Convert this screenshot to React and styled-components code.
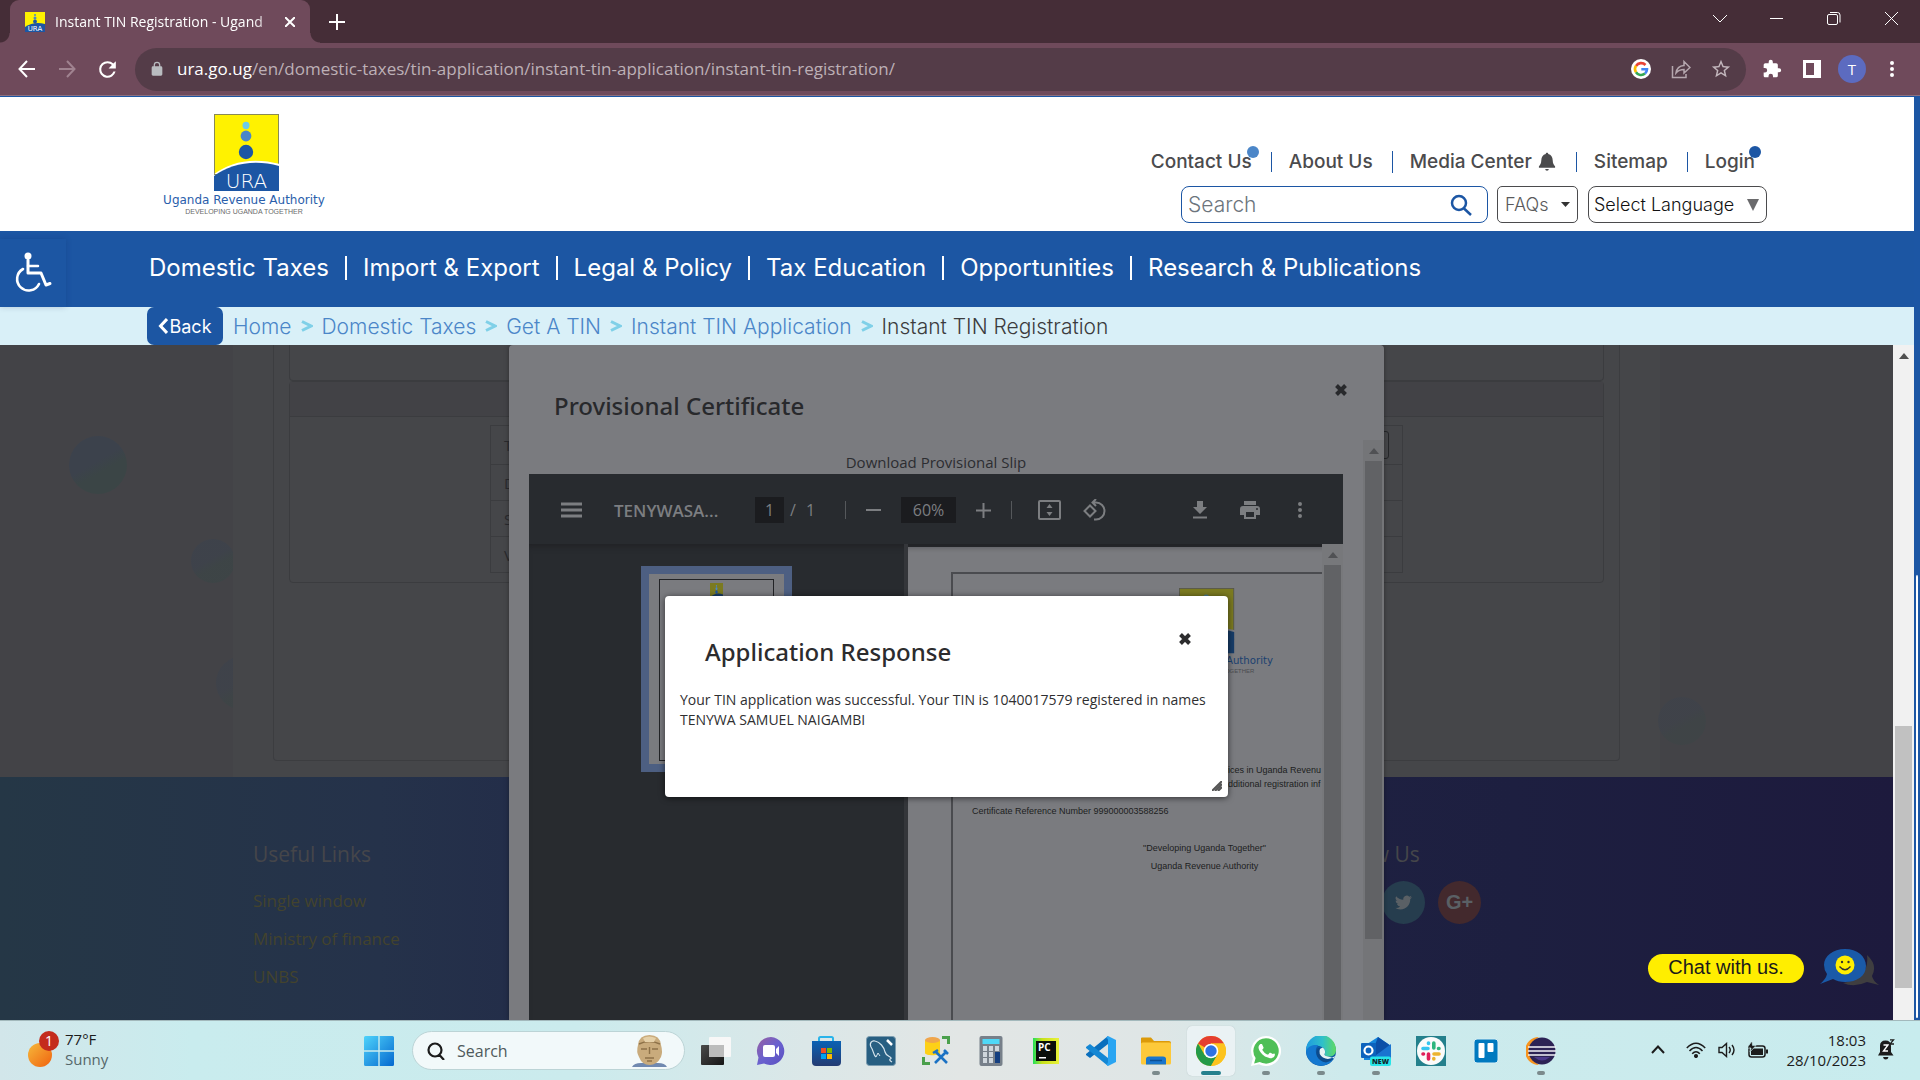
import React from "react";
import styled, { createGlobalStyle } from "styled-components";

const ui = `"Segoe UI", "Open Sans", "Noto Sans", sans-serif`;
const heading = `"Segoe UI", "Noto Sans", "Open Sans", sans-serif`;
const brand = `"Gotham", "Inter", "Liberation Sans", sans-serif`;
const arial = `"Liberation Sans", Arial, sans-serif`;

const GlobalStyle = createGlobalStyle`
  *, *::before, *::after { box-sizing: border-box; }
  html, body, #root { height: 100%; }
  body { margin: 0; font-family: ${ui}; overflow: hidden; }
  button, input, select { font: inherit; color: inherit; background: none; border: 0; padding: 0; margin: 0; outline: 0; }
  a { color: inherit; text-decoration: none; }
  h2, h3, p, ul { margin: 0; padding: 0; font-weight: inherit; list-style: none; }
  svg { display: block; flex: none; }
`;

const Screen = styled.div`
  height: 100vh;
  display: flex;
  flex-direction: column;
  overflow: hidden;
`;

const IconButton = styled.button`
  display: flex;
  align-items: center;
  justify-content: center;
  width: ${(p) => p.$w || 40}px;
  height: ${(p) => p.$h || 40}px;
  flex: none;
`;

/* ---------- browser chrome ---------- */
const TabStrip = styled.div`
  height: 43px;
  flex: none;
  display: flex;
  background: #452d37;
  color: #fff;
  padding-left: 10px;
`;
const Tab = styled.div`
  position: relative;
  width: 300px;
  display: flex;
  align-items: center;
  justify-content: space-between;
  padding: 0 10px 0 15px;
  background: #6f4a5b;
  border-radius: 9px 9px 0 0;
  &::before, &::after {
    content: "";
    position: absolute;
    bottom: 0;
    width: 10px;
    height: 10px;
  }
  &::before { left: -10px; background: radial-gradient(circle at 0 0, transparent 9px, #6f4a5b 10px); }
  &::after { right: -10px; background: radial-gradient(circle at 100% 0, transparent 9px, #6f4a5b 10px); }
`;
const TabTitle = styled.span`
  flex: 1;
  margin-left: 10px;
  font-size: 14px;
  line-height: 20px;
  white-space: nowrap;
  mask-image: linear-gradient(90deg, #000 88%, rgba(0, 0, 0, 0.2));
`;
const WindowControls = styled.div`
  margin-left: auto;
  display: flex;
  height: 37px;
`;
const Toolbar = styled.div`
  height: 53px;
  flex: none;
  display: flex;
  align-items: center;
  background: #6f4a5b;
  border-bottom: 1px solid #8d7080;
  padding: 0 8px 0 7px;
  color: #fff;
`;
const AddressBar = styled.div`
  flex: 1;
  height: 43px;
  border-radius: 22px;
  background: #543c48;
  display: flex;
  align-items: center;
  margin: 0 6px 0 8px;
  padding: 0 5px 0 14px;
`;
const Url = styled.span`
  flex: 1;
  margin-left: 12px;
  font-size: 17px;
  line-height: 24px;
  color: #bdb0b6;
  white-space: nowrap;
  b { font-weight: 400; color: #fff; }
`;
const Avatar = styled.button`
  width: 28px;
  height: 28px;
  margin: 0 6px;
  border-radius: 50%;
  background: #5c6bc0;
  color: #fff;
  font-size: 15px;
`;

/* ---------- site frame ---------- */
const Viewport = styled.div`
  flex: 1;
  min-height: 0;
  display: flex;
  border-top: 1px solid #1c56a4;
`;
const Site = styled.div`
  flex: 1;
  min-width: 0;
  display: flex;
  flex-direction: column;
`;
const OuterScroll = styled.div`
  width: 6px;
  background: #1c56a4;
  display: flex;
  flex-direction: column;
  &::before { content: ""; flex: 479; }
  &::after { content: ""; flex: 444; background: #fff; border: 1px solid #1c56a4; border-width: 1px 2px 2px; border-radius: 3px; }
`;
const Container = styled.div`
  width: 100%;
  max-width: 1620px;
  margin: 0 auto;
  display: flex;
`;
const Header = styled.header`
  height: 134px;
  flex: none;
  display: flex;
  background: #fff;
`;
const LogoLink = styled.a`
  display: block;
  margin: 17px 0 0 15px;
`;
const HeaderSide = styled.div`
  margin-left: auto;
  padding-top: 53px;
  display: flex;
  flex-direction: column;
  align-items: flex-end;
  font-family: ${brand};
`;
const TopLinks = styled.nav`
  display: flex;
  align-items: center;
  margin-right: 12px;
  height: 24px;
  font-size: 19px;
  font-weight: 500;
  color: #4b4b4d;
`;
const TopLink = styled.a`
  position: relative;
  display: flex;
  align-items: center;
  gap: 5px;
  padding: 0 19px 0 17px;
  border-left: 1px solid ${(p) => (p.$first ? "transparent" : "#1c56a4")};
  line-height: 20px;
  &:last-child { padding-right: 0; }
`;
const Dot = styled.i`
  position: absolute;
  top: -6px;
  right: ${(p) => p.$right}px;
  width: 12px;
  height: 12px;
  border-radius: 50%;
  background: ${(p) => p.$color};
`;
const Tools = styled.div`
  display: flex;
  margin-top: 12px;
  height: 37px;
  color: #4b4b4d;
`;
const SearchBox = styled.label`
  width: 307px;
  display: flex;
  align-items: center;
  border: 1px solid #1c56a4;
  border-radius: 8px;
  padding: 0 15px 0 6px;
  input { flex: 1; min-width: 0; font-size: 21px; font-weight: 300; }
  input::placeholder { color: #6c757d; opacity: 1; }
`;
const SelectBox = styled.label`
  width: ${(p) => p.$w}px;
  margin-left: ${(p) => p.$gap}px;
  display: flex;
  align-items: center;
  border: 1px solid #4b4b4d;
  border-radius: ${(p) => p.$r}px;
  padding: 0 7px 0 ${(p) => p.$pad}px;
  font-size: 18px;
  font-weight: 300;
  color: ${(p) => p.$color};
  select { flex: 1; min-width: 0; appearance: none; }
`;
const MainNav = styled.nav`
  height: 76px;
  flex: none;
  display: flex;
  align-items: center;
  position: relative;
  padding-bottom: 2px;
  background: #1c56a3;
  color: #fff;
  font-family: ${brand};
  font-size: 24px;
`;
const Access = styled.button`
  position: absolute;
  left: 0;
  top: 8px;
  width: 66px;
  height: 68px;
  padding-left: 14px;
  background: #1c56a3;
  box-shadow: 0 0 6px rgba(0, 20, 80, 0.18);
`;
const NavLink = styled.a`
  padding: 0 16px;
  line-height: 24px;
  border-left: 2px solid #fff;
  white-space: nowrap;
  &:first-child { border-left: 0; padding-left: 2px; }
`;
const Crumbs = styled.nav`
  height: 38px;
  flex: none;
  display: flex;
  background: #d9f0f8;
  font-family: ${brand};
  font-size: 21px;
  font-weight: 300;
  color: #4b86c8;
`;
const BackButton = styled.button`
  width: 76px;
  margin-right: 10px;
  border-radius: 7px;
  background: #1c56a3;
  color: #fff;
  font-size: 18px;
  font-weight: 400;
  display: flex;
  align-items: center;
  justify-content: center;
  gap: 1px;
`;
const Crumb = styled.span`
  display: flex;
  align-items: center;
  white-space: nowrap;
  color: ${(p) => (p.$current ? "#3c3c3e" : "inherit")};
  svg { margin: 0 9px; }
`;

/* ---------- dimmed page ---------- */
const Frame = styled.div`
  flex: 1;
  min-height: 0;
  display: flex;
`;
const PageBody = styled.main`
  position: relative;
  flex: 1;
  min-width: 0;
  display: flex;
  flex-direction: column;
  overflow: hidden;
  background: #434347;
`;
const Upper = styled.section`
  position: relative;
  height: 432px;
  flex: none;
  overflow: hidden;
`;
const Bubble = styled.i`
  position: absolute;
  left: ${(p) => p.$x}px;
  top: ${(p) => p.$y}px;
  width: ${(p) => p.$d}px;
  height: ${(p) => p.$d}px;
  border-radius: 50%;
  background: linear-gradient(150deg, #3c424c 45%, #3b4546 60%);
  opacity: ${(p) => p.$o || 1};
`;
const Band = styled.div`
  position: relative;
  max-width: 1427px;
  height: 100%;
  margin: 0 auto;
  background: #454649;
`;
const FormCard = styled.div`
  max-width: 1347px;
  height: 416px;
  margin: 0 auto;
  padding: 0 15px;
  border: 1px solid #3c3d40;
  border-top: 0;
  border-radius: 0 0 4px 4px;
`;
const Panel = styled.div`
  height: ${(p) => p.$h}px;
  border: 1px solid #3b3c3f;
  border-radius: 4px;
  ${(p) => p.$open && "border-top: 0; border-radius: 0 0 4px 4px;"}
`;
const PanelHead = styled.div`
  height: 35px;
  border-bottom: 1px solid #3b3c3f;
  background: #424246;
`;
const FieldTable = styled.table`
  width: 913px;
  margin: 8px auto 0;
  border-collapse: collapse;
  font-size: 15px;
  color: #2a2a2e;
  td, th { height: 36px; padding: 0 13px; border: 1px solid #3b3c3f; text-align: left; font-weight: 400; }
  tr:first-child > * { height: 39px; }
  input { width: 100%; height: 28px; border: 1px solid #252629; border-radius: 3px; display: block; }
`;
const Footer = styled.footer`
  flex: 1;
  display: grid;
  grid-template-columns: 1fr 314px;
  padding: 62px 253px 0;
  background: linear-gradient(90deg, #253746 0, #25324a 20%, #232d49 28%, #1f2242 62%, #1d1f40 80%, #1d1a3d 100%);
  color: #45464a;
`;
const FooterTitle = styled.h3`
  font-size: 21px;
  line-height: 30px;
`;
const FooterLinks = styled.ul`
  margin-top: 13px;
  font-size: 17px;
  line-height: 38px;
  color: #43432d;
`;
const Social = styled.div`
  display: flex;
  gap: 13px;
  margin-top: 12px;
`;
const SocialLink = styled.a`
  width: 43px;
  height: 43px;
  border-radius: 50%;
  display: flex;
  align-items: center;
  justify-content: center;
  background: ${(p) => p.$bg};
  color: #5a6065;
  font: 700 20px ${arial};
`;

/* ---------- scroll bars ---------- */
const Bar = styled.div`
  width: 21px;
  flex: none;
  display: flex;
  flex-direction: column;
  align-items: center;
  background: ${(p) => p.$track};
`;
const BarArrow = styled.span`
  height: 21px;
  flex: none;
  display: flex;
  align-items: center;
`;
const BarPart = styled.span`
  width: 17px;
  flex: ${(p) => p.$size} 0 0;
  background: ${(p) => p.$color || "transparent"};
`;
function ScrollBar({ track, thumb, arrow, parts }) {
  return (
    <Bar $track={track}>
      <BarArrow>
        <svg width="10" height="6"><path d="M0 6L5 0L10 6Z" fill={arrow} /></svg>
      </BarArrow>
      <BarPart $size={parts[0]} />
      <BarPart $size={parts[1]} $color={thumb} />
      <BarPart $size={parts[2]} />
    </Bar>
  );
}

/* ---------- certificate modal ---------- */
const Overlay = styled.div`
  position: absolute;
  inset: 0;
  display: flex;
  justify-content: center;
  align-items: ${(p) => (p.$top ? "flex-start" : "stretch")};
  padding-top: ${(p) => p.$top || 0}px;
`;
const Modal = styled.section`
  width: 875px;
  display: flex;
  flex-direction: column;
  border-radius: 4px 4px 0 0;
  background: #7a7b7f;
  box-shadow: 0 0 5px rgba(0, 0, 0, 0.35);
`;
const ModalHead = styled.div`
  height: ${(p) => p.$h}px;
  flex: none;
  display: flex;
  justify-content: space-between;
  padding: ${(p) => p.$top}px 23px 0 ${(p) => p.$pad}px;
  color: ${(p) => p.$color};
  h2 { margin-top: ${(p) => p.$drop}px; font: 500 24px/34px ${heading}; }
`;
const ModalScroll = styled.div`
  flex: 1;
  min-height: 0;
  display: flex;
`;
const ModalContent = styled.div`
  flex: 1;
  min-width: 0;
  padding: 11px 20px 0;
  display: flex;
  flex-direction: column;
`;
const SlipLink = styled.a`
  align-self: center;
  font-size: 15px;
  line-height: 23px;
  color: #2c2d31;
`;
const Pdf = styled.div`
  flex: 1;
  min-height: 0;
  display: flex;
  flex-direction: column;
  background: #282b2f;
`;
const PdfBar = styled.div`
  height: 70px;
  flex: none;
  display: flex;
  align-items: center;
  padding: 2px 31px 0 32px;
  color: #7c7e81;
  font-size: 16px;
`;
const PdfTitle = styled.b`
  width: 110px;
  margin: 0 31px 0 32px;
  font-size: 17px;
  font-weight: 600;
`;
const PdfInput = styled.input`
  width: ${(p) => p.$w}px;
  height: 26px;
  background: #1b1c1f;
  text-align: center;
`;
const PdfCount = styled.span`
  width: 61px;
  padding-left: 6px;
  word-spacing: 6px;
`;
const Rule = styled.i`
  width: 1px;
  height: 18px;
  background: #55585b;
`;
const PdfTools = styled.div`
  display: flex;
  align-items: center;
  gap: ${(p) => p.$gap}px;
  margin-left: ${(p) => p.$left};
`;
const PdfBody = styled.div`
  flex: 1;
  min-height: 0;
  display: flex;
  box-shadow: inset 0 6px 6px -4px #202124;
`;
const Thumbs = styled.aside`
  width: 379px;
  flex: none;
  border-right: 4px solid #34363a;
  padding-top: 22px;
`;
const Thumb = styled.div`
  width: 151px;
  height: 206px;
  margin: 0 auto;
  border: 8px solid #4d5f82;
  background: #7a7b7f;
  padding: 5px 10px 2px;
`;
const ThumbPage = styled.div`
  height: 182px;
  border: 1px solid #222326;
  padding-top: 3px;
  display: flex;
  justify-content: center;
`;
const PaperView = styled.div`
  flex: 1;
  min-width: 0;
  overflow: hidden;
  padding-top: 3px;
`;
const Paper = styled.article`
  width: 596px;
  height: 100%;
  background: #7a7b7f;
  padding: 25px 0 0 43px;
  box-shadow: inset 0 5px 5px -4px #5c5d61;
`;
const PaperFrame = styled.div`
  width: 507px;
  height: 100%;
  border: 2px solid #4a4b4f;
  border-bottom: 0;
  display: flex;
  flex-direction: column;
  align-items: center;
  padding: 14px 19px 0;
  font: 9px/14px ${arial};
  color: #1d1e21;
  white-space: nowrap;
`;
const PaperText = styled.p`
  align-self: ${(p) => p.$align || "flex-start"};
  padding-left: ${(p) => p.$left || 0}px;
  margin-top: ${(p) => p.$top || 0}px;
`;
const Dialog = styled.section`
  position: relative;
  width: 563px;
  height: 201px;
  border-radius: 4px;
  background: #fff;
  box-shadow: 0 1px 6px rgba(0, 0, 0, 0.6);
`;
const DialogText = styled.p`
  padding: 0 15px;
  font-size: 14px;
  line-height: 20px;
  color: #2f2f31;
`;
const Grip = styled.svg`
  position: absolute;
  right: 6px;
  bottom: 6px;
`;
const Chat = styled.div`
  position: absolute;
  right: 13px;
  bottom: 33px;
  display: flex;
  align-items: flex-end;
  gap: 16px;
`;
const ChatPill = styled.button`
  width: 156px;
  height: 29px;
  margin-bottom: 4px;
  padding-bottom: 3px;
  border-radius: 15px;
  background: #ffee00;
  color: #1b1b1b;
  font: 20px ${arial};
`;

/* ---------- taskbar ---------- */
const Taskbar = styled.footer`
  height: 60px;
  flex: none;
  display: grid;
  grid-template-columns: 1fr auto 1fr;
  border-top: 1px solid #a3b9bc;
  color: #1c1c1c;
  background: linear-gradient(90deg, #d2e6ea 0, #c9ecee 10%, #cbebed 30%, #dbe7e8 42%, #e2e6e5 50%, #dfe6e6 60%, #cdeaec 70%, #c8ecee 100%);
`;
const Weather = styled.button`
  display: flex;
  align-items: center;
  justify-self: start;
  padding: 0 0 4px 27px;
  gap: 5px;
  text-align: left;
  font-size: 15px;
  line-height: 20px;
  span { display: block; }
  span + span { color: #55676a; }
`;
const Apps = styled.div`
  display: flex;
  align-items: center;
  gap: 7px;
`;
const AppButton = styled.button`
  position: relative;
  width: 48px;
  height: 50px;
  display: flex;
  align-items: center;
  justify-content: center;
  border-radius: 5px;
  ${(p) => p.$active && "background: #eaf2f4; box-shadow: 0 0 1px #a9b9bb;"}
  &::after {
    content: "";
    position: absolute;
    bottom: 1px;
    width: ${(p) => (p.$active ? 20 : 8)}px;
    height: 4px;
    border-radius: 2px;
    background: ${(p) => (p.$active ? "#26808d" : "#7b8a8c")};
    display: ${(p) => (p.$active || p.$running ? "block" : "none")};
  }
`;
const TaskSearch = styled.label`
  width: 273px;
  height: 39px;
  margin-left: 2px;
  display: flex;
  align-items: center;
  gap: 12px;
  padding: 0 17px 0 14px;
  border-radius: 20px;
  background: #f2f9fa;
  border: 1px solid #bcd4d6;
  font-size: 16px;
  input { flex: 1; min-width: 0; }
  input::placeholder { color: #4f5a5c; opacity: 1; }
`;
const Tray = styled.div`
  justify-self: end;
  display: flex;
  align-items: center;
  padding: 0 24px 2px 0;
`;
const Clock = styled.time`
  width: 90px;
  margin-right: 10px;
  text-align: right;
  font-size: 15px;
  line-height: 20px;
  white-space: nowrap;
`;

/* ---------- drawings ---------- */
function UraLogo({ width = 164, dim }) {
  const c = dim
    ? { y: "#7b7a20", b: "#173c68", l: "#4c7c8f", m: "#2f5274", w: "#7a7b7f", t: "#1c416f", g: "#4a4b4f", s: "#55564a" }
    : { y: "#fff200", b: "#1c56a4", l: "#6dcbea", m: "#4b86c8", w: "#fff", t: "#2a5eab", g: "#6b6b6b", s: "#8a8a55" };
  return (
    <svg width={width} height={(width * 102) / 164} viewBox="0 0 164 102" role="img" aria-label="Uganda Revenue Authority">
      <rect x="52.5" y="0.500" width="64" height="60" fill={c.y} stroke={c.s} />
      <ellipse cx="84" cy="11.500" rx="3.500" ry="3.700" fill={c.l} />
      <circle cx="84" cy="22" r="5.400" fill={c.m} />
      <circle cx="84" cy="38" r="7.200" fill={c.b} />
      <path d="M51 61C68 47 92 43 118 50V60H51Z" fill={c.w} />
      <path d="M52 62C68 50 92 45 117 52V77H52Z" fill={c.b} />
      <text x="84.500" y="74" fontFamily="DejaVu Sans" fontWeight="200" fontSize="20" textAnchor="middle" fill={c.w}>URA</text>
      <text x="82" y="90" fontFamily="DejaVu Sans" fontSize="12" textAnchor="middle" fill={c.t}>Uganda Revenue Authority</text>
      <text x="82" y="100" fontFamily="Liberation Sans" fontSize="7" textAnchor="middle" fill={c.g}>DEVELOPING UGANDA TOGETHER</text>
    </svg>
  );
}

const MiniLogo = ({ w = 20, h = 20, dim }) => (
  <svg width={w} height={h} viewBox="0 0 20 20" preserveAspectRatio="none">
    <rect width="20" height="20" fill={dim ? "#7b7a20" : "#fff200"} />
    <circle cx="10" cy="3" r="1" fill="#4b86c8" />
    <circle cx="10" cy="6" r="1.500" fill="#4b86c8" />
    <circle cx="10" cy="9.500" r="1.900" fill="#1c56a4" />
    <path d="M0 15Q9 9 20 12V20H0Z" fill={dim ? "#173c68" : "#1c56a4"} />
    <text x="10" y="19" fontSize="7" fontFamily="DejaVu Sans" textAnchor="middle" fill={dim ? "#7a7b7f" : "#fff"}>URA</text>
  </svg>
);

const Line = ({ w = 20, h = w, d, sw = 2, box, color = "currentColor", ...rest }) => (
  <svg width={w} height={h} viewBox={box || `0 0 ${w} ${h}`} fill="none" stroke={color} strokeWidth={sw} {...rest}>
    <path d={d} />
  </svg>
);
const Solid = ({ w = 20, h = w, d, box = "0 0 24 24", color = "currentColor" }) => (
  <svg width={w} height={h} viewBox={box} fill={color}><path fillRule="evenodd" d={d} /></svg>
);

const CloseGlyph = () => (
  <Line w={14} sw={4} d="M2.500 2.500L11.500 11.500M11.500 2.500L2.500 11.500" />
);

const ic = {
  dots: "M12 8a2 2 0 1 0 0-4 2 2 0 0 0 0 4zm0 2a2 2 0 1 0 0 4 2 2 0 0 0 0-4zm0 6a2 2 0 1 0 0 4 2 2 0 0 0 0-4z",
  lock: "M18 8h-1V6A5 5 0 0 0 7 6v2H6a2 2 0 0 0-2 2v10c0 1.100.9 2 2 2h12a2 2 0 0 0 2-2V10a2 2 0 0 0-2-2zM8.900 6a3.100 3.100 0 0 1 6.200 0v2H8.900z",
  reload: "M17.650 6.350A7.950 7.950 0 0 0 12 4a8 8 0 1 0 7.730 10h-2.080A6 6 0 1 1 12 6c1.660 0 3.140.69 4.220 1.780L13 11h7V4z",
  puzzle: "M20.500 11H19V7a2 2 0 0 0-2-2h-4V3.500a2.500 2.500 0 0 0-5 0V5H4a2 2 0 0 0-2 2v3.800h1.500a2.700 2.700 0 0 1 0 5.400H2V20c0 1.100.9 2 2 2h3.800v-1.500a2.700 2.700 0 0 1 5.400 0V22H17a2 2 0 0 0 2-2v-4h1.500a2.500 2.500 0 0 0 0-5z",
  star: "M22 9.240l-7.190-.62L12 2 9.190 8.630 2 9.240l5.460 4.730L5.820 21 12 17.270 18.180 21l-1.630-7.030zM12 15.400l-3.760 2.270 1-4.280-3.320-2.880 4.380-.38L12 6.100l1.710 4.040 4.380.38-3.320 2.880 1 4.280z",
  bell: "M12 22.500a2.200 2.200 0 0 0 2.200-2H9.800a2.200 2.200 0 0 0 2.200 2zM12 1c-.9 0-1.500.6-1.500 1.500C7 3.300 5.300 6.300 5.200 9.500 5 14 3.800 15.500 2.300 17.200V19h19.400v-1.800c-1.500-1.700-2.700-3.200-2.900-7.700-.1-3.200-1.800-6.200-5.300-7C13.500 1.600 12.900 1 12 1z",
  twitter: "M23.950 4.570a10 10 0 0 1-2.820.77 4.960 4.960 0 0 0 2.160-2.720c-.95.55-2 .96-3.130 1.180a4.920 4.920 0 0 0-8.380 4.480C7.690 8.100 4.070 6.130 1.640 3.160a4.920 4.920 0 0 0 1.520 6.570 4.900 4.900 0 0 1-2.230-.62v.06a4.920 4.920 0 0 0 3.950 4.830 5 5 0 0 1-2.210.08 4.940 4.940 0 0 0 4.600 3.420A9.870 9.870 0 0 1 0 19.540a13.990 13.990 0 0 0 7.550 2.210c9.050 0 14-7.500 14-13.980 0-.21 0-.42-.02-.63a9.940 9.940 0 0 0 2.460-2.550z",
  download: "M19 9h-4V3H9v6H5l7 7zM5 18.500v2h14v-2z",
  print: "M19 8H5a3 3 0 0 0-3 3v6h4v4h12v-4h4v-6a3 3 0 0 0-3-3zm-3 11H8v-5h8zm3-7a1 1 0 1 1 0-2 1 1 0 0 1 0 2zM18 3H6v4h12z",
  whatsapp: "M17.470 14.380c-.3-.15-1.760-.87-2.030-.97-.27-.1-.47-.15-.67.150-.2.300-.77.970-.94 1.160-.17.200-.35.220-.64.080-.3-.15-1.260-.46-2.390-1.480-.88-.79-1.480-1.760-1.650-2.060-.17-.3-.02-.46.130-.6.130-.14.300-.35.450-.52.150-.18.200-.3.300-.5.100-.2.050-.37-.03-.52-.07-.15-.67-1.610-.92-2.210-.24-.58-.49-.5-.67-.51h-.57c-.2 0-.52.070-.79.370-.27.300-1.040 1.020-1.040 2.480s1.070 2.870 1.210 3.070c.15.200 2.100 3.200 5.080 4.490 2.950 1.200 3.560.96 4.200.9.640-.06 2.060-.84 2.350-1.650.29-.81.290-1.500.2-1.650-.09-.15-.27-.22-.57-.37z",
};

const appIcons = [
  ["Task view", <svg key="a" width="30" height="30"><defs><linearGradient id="tv" x1="0" y1="0" x2="1" y2="1"><stop stopColor="#4a4a4a" /><stop offset="1" stopColor="#161616" /></linearGradient></defs><rect x="0" y="9" width="23" height="20" rx="1" fill="url(#tv)" /><rect x="8" y="1" width="22" height="20" rx="1" fill="#f7f7f7" /><rect x="8" y="9" width="15" height="12" fill="#bcbcbc" /></svg>],
  ["Chat", <svg key="b" width="30" height="30"><defs><linearGradient id="ch" x1="0" y1="0" x2="1" y2="1"><stop stopColor="#9a5fa0" /><stop offset=".5" stopColor="#6a62cf" /><stop offset="1" stopColor="#5a4fc0" /></linearGradient></defs><path d="M15 1a14 14 0 1 1-7 26.500L1 29 2.500 21.500A14 14 0 0 1 15 1Z" fill="url(#ch)" /><rect x="7" y="9" width="12" height="12" rx="2" fill="#fff" /><path d="M20 13L23 10V20L20 17Z" fill="#fff" /></svg>],
  ["Store", <svg key="c" width="30" height="30"><defs><linearGradient id="st" x1="0" y1="0" x2="0" y2="1"><stop stopColor="#0b62b4" /><stop offset="1" stopColor="#243b73" /></linearGradient></defs><path d="M8 7V2.500A1.500 1.500 0 0 1 9.500 1H20.500A1.500 1.500 0 0 1 22 2.500V7" fill="none" stroke="#2ab4ea" strokeWidth="2" /><path d="M1 5H30V26A4 4 0 0 1 26 30H5A4 4 0 0 1 1 26Z" fill="url(#st)" /><path d="M10 12h5v5h-5z" fill="#f25022" /><path d="M16 12h5v5h-5z" fill="#7fba00" /><path d="M10 18h5v5h-5z" fill="#00a4ef" /><path d="M16 18h5v5h-5z" fill="#ffb900" /></svg>],
  ["MySQL Workbench", <svg key="d" width="30" height="30"><rect x=".5" y=".5" width="29" height="29" rx="3" fill="#285f82" stroke="#7b9cb0" /><path d="M10 21C7 19 8 15 5 11C3 7 6 4 9 5C14 6 18 11 19 16C20 20 24 20 25 22C26 23 21 23 26 26" fill="none" stroke="#d9e6ee" strokeWidth="1.200" /><path d="M10 21L12 17L14 20" fill="none" stroke="#d9e6ee" /><path d="M21 4L26 9" stroke="#fff" strokeWidth="2.500" /></svg>],
  ["SQL tools", <svg key="e" width="30" height="30"><path d="M4 4V17C4 20 19 20 19 17V4Z" fill="#fdd017" /><ellipse cx="11.500" cy="4" rx="7.500" ry="3" fill="#efa64c" /><path d="M21 1.500H27.500V8M2.500 21V27.500H9" fill="none" stroke="#4aa04c" strokeWidth="3" /><path d="M14 15L26 27M26 15L14 27M12 17L17 14M23 14L27 18" stroke="#1b72c4" strokeWidth="2.600" /></svg>],
  ["Calculator", <svg key="f" width="24" height="30"><rect x=".5" width="23" height="30" rx="2" fill="#77808a" /><rect x="3.500" y="3" width="17" height="5" fill="#4fd8f7" /><path d="M4 10h4v5H4zM10 10h4v5h-4zM16 10h4v5h-4zM4 16h4v5H4zM10 16h4v5h-4zM4 22h4v5H4zM10 22h4v5h-4z" fill="#cfd6dc" /><path d="M16 16h5v11h-5z" fill="#143f80" /></svg>],
  ["PyCharm", <svg key="g" width="26" height="26"><defs><linearGradient id="pc"><stop stopColor="#21e05a" /><stop offset=".35" stopColor="#c8e01c" /><stop offset="1" stopColor="#e9f23a" /></linearGradient></defs><rect width="26" height="26" fill="url(#pc)" /><rect x="3" y="3" width="20" height="20" fill="#0b0f0a" /><text x="5" y="13" fontSize="10" fontWeight="700" fontFamily="Open Sans" fill="#fff">PC</text><rect x="6" y="19" width="7" height="1.500" fill="#fff" /></svg>],
  ["VS Code", <svg key="h" width="30" height="30" viewBox="0 0 30 30"><path d="M22 0L22 8L4 22L0 19V18Z" fill="#0a6fbd" /><path d="M22 30L22 22L4 8L0 11V12Z" fill="#1487d4" /><path d="M22 0L30 4V26L22 30L20 28Q22 28 22 26V4Q22 2 20 2Z" fill="#2aa5f2" /></svg>],
  ["File Explorer", <svg key="i" width="30" height="28"><path d="M0 1.500Q0 .5 1 .5H10L13 4H28Q30 4 30 6V12H0Z" fill="#dc9a0a" /><rect y="5.500" width="30" height="22" rx="1.500" fill="#fdc93a" /><path d="M5 27.500V22Q5 19.500 8 19.500H22Q25 19.500 25 22V27.500Z" fill="#1a76cc" /><path d="M9 23.500H21" stroke="#0b4f94" strokeWidth="1.500" /></svg>, "running"],
  ["Chrome", <svg key="j" width="30" height="30" viewBox="0 0 30 30"><circle cx="15" cy="15" r="15" fill="#fcc31e" /><path d="M15 15L2 7.500A15 15 0 0 1 28 7.500H15Z" fill="#e53e30" /><path d="M2 7.500A15 15 0 0 0 15 30L21.500 18.700L8.500 18.700Z" fill="#249a48" /><path d="M15 15L21.500 18.700L15 30A15 15 0 0 0 28 7.500H15Z" fill="#fcc31e" /><circle cx="15" cy="15" r="7.300" fill="#fff" /><circle cx="15" cy="15" r="5.700" fill="#2f72e3" /></svg>, "active"],
  ["WhatsApp", <svg key="k" width="30" height="30" viewBox="0 0 24 24"><path d="M12 0a12 12 0 1 1-5.600 22.600L0 24l1.500-6.300A12 12 0 0 1 12 0Z" fill="#fff" /><path d="M12 1.700a10.200 10.200 0 1 1-5 19.100L2.500 22l1.200-4.400A10.200 10.200 0 0 1 12 1.700Z" fill="#4fbf57" /><path d={ic.whatsapp} fill="#fff" /></svg>, "running"],
  ["Edge", <svg key="l" width="30" height="30" viewBox="0 0 30 30"><defs><linearGradient id="eg"><stop stopColor="#1f9be0" /><stop offset=".55" stopColor="#2fc0c9" /><stop offset="1" stopColor="#5fda62" /></linearGradient></defs><circle cx="15" cy="15" r="15" fill="#0c59a4" /><path d="M0 14A15 15 0 0 1 30 14C30 19 26 21 22 20.500Q17.500 20 19 17C20 13 16 10 12 10Q5 10 0 16Z" fill="url(#eg)" /><path d="M0 15C3 9 9 8.500 12.500 9.500C9 12 9 17 12 20C16 25 23 25 27.500 23A15 15 0 0 1 0 15Z" fill="#1478d0" /><path d="M12 12C8 17 11 25 20 26.500Q24 26 27.500 23Q20 24 15.500 19.500Q12 15 14.500 12Z" fill="#0d4b8c" /><path d="M14 13Q12 18 17 21.500Q23 25 29 20L28 22.500Q24 20.800 20 20Q17.500 19 19 17Q19.500 13 16.500 11.500Z" fill="#e6f3f4" /></svg>, "running"],
  ["Outlook", <svg key="m" width="31" height="30" viewBox="0 0 31 30"><path d="M3 10L17 1L30 10V24H3Z" fill="#1586dc" /><path d="M17 1L30 10L14 20V9Z" fill="#0b4fa8" /><path d="M14 20L30 8V26H14Z" fill="#1a74d0" /><rect y="7" width="15" height="15" rx="1" fill="#0c62bd" /><circle cx="7.500" cy="14.500" r="4" fill="none" stroke="#fff" strokeWidth="2.200" /><rect x="9" y="20.500" width="21" height="9.500" rx="2" fill="#27e5e8" /><text x="19.500" y="28.300" fontSize="7" fontWeight="800" textAnchor="middle" fontFamily="Open Sans" fill="#10262b">NEW</text></svg>, "running"],
  ["Slack", <svg key="n" width="30" height="30"><rect width="30" height="30" fill="#24808c" /><circle cx="15" cy="15" r="14" fill="#fbfbfb" /><g strokeWidth="3.600" strokeLinecap="round"><path d="M7 12.500H12M12.500 7V7.500" stroke="#36c5f0" /><path d="M17.800 7V12M22.500 12.500H23" stroke="#2eb67d" /><path d="M18 18H23M17.800 22.500V23" stroke="#ecb22e" /><path d="M12.500 18V23M7 18H7.500" stroke="#e01e5a" /></g></svg>],
  ["Trello", <svg key="o" width="26" height="26"><rect x="1" y="1" width="24" height="24" rx="3" fill="#0079bf" stroke="#d5eef4" /><rect x="5.500" y="5" width="6" height="15" rx="1" fill="#fff" /><rect x="14.500" y="5" width="6" height="9" rx="1" fill="#fff" /></svg>],
  ["Eclipse", <svg key="p" width="30" height="28" viewBox="0 0 30 28"><path d="M13 0A14 14 0 0 0 13 28A16 16 0 0 1 13 0Z" fill="#f7941e" /><ellipse cx="16" cy="14" rx="13.500" ry="13.500" fill="#2c2255" /><path d="M8 20Q16 27 24 20Z" fill="#4c3a8c" /><path d="M2 10H30M2 14H30M2 18H30" stroke="#f2f2f7" strokeWidth="1.600" /></svg>, "running"],
];

const navItems = ["Domestic Taxes", "Import & Export", "Legal & Policy", "Tax Education", "Opportunities", "Research & Publications"];
const crumbs = ["Home", "Domestic Taxes", "Get A TIN", "Instant TIN Application"];
const fields = ["TIN", "Date", "Status", "View"];

export default function App() {
  return (
    <Screen>
      <GlobalStyle />
      <TabStrip>
        <Tab>
          <MiniLogo />
          <TabTitle>Instant TIN Registration - Ugand</TabTitle>
          <IconButton $w={20} $h={20} aria-label="Close tab"><Line w={10} sw={2} d="M0 0L10 10M10 0L0 10" /></IconButton>
        </Tab>
        <IconButton $w={54} $h={43} aria-label="New tab"><Line w={16} d="M8 0V16M0 8H16" /></IconButton>
        <WindowControls>
          <IconButton $w={57} $h={37} aria-label="Search tabs"><Line w={14} h={8} sw={1} d="M0 0L7 7L14 0" /></IconButton>
          <IconButton $w={57} $h={37} aria-label="Minimise"><Line w={13} h={1} d="M0 0H13" /></IconButton>
          <IconButton $w={57} $h={37} aria-label="Restore"><Line w={14} sw={1} d="M.5 4Q.5 2.500 2 2.500H9Q10.500 2.500 10.500 4V11Q10.500 12.500 9 12.500H2Q.5 12.500 .5 11ZM3 .5H10.500Q13 .5 13 3V10.500" /></IconButton>
          <IconButton $w={58} $h={37} aria-label="Close"><Line w={13} sw={1} d="M0 0L13 13M13 0L0 13" /></IconButton>
        </WindowControls>
      </TabStrip>
      <Toolbar>
        <IconButton aria-label="Back"><Line w={18} d="M17 9H2M9 1L1.500 9L9 17" /></IconButton>
        <IconButton aria-label="Forward"><Line w={18} color="#a08390" d="M1 9H16M9 1L16.500 9L9 17" /></IconButton>
        <IconButton aria-label="Reload"><Solid w={25} d={ic.reload} /></IconButton>
        <AddressBar>
          <Solid w={16} color="#b9bcc0" d={ic.lock} />
          <Url><b>ura.go.ug</b>/en/domestic-taxes/tin-application/instant-tin-application/instant-tin-registration/</Url>
          <IconButton aria-label="Google">
            <svg width="20" height="20" viewBox="0 0 20 20"><circle cx="10" cy="10" r="10" fill="#fff" /><g fill="none" strokeWidth="2.600"><path d="M14.500 6A6 6 0 0 0 5 7" stroke="#ea4335" /><path d="M5 6.700A6 6 0 0 0 5 13.300" stroke="#fbbc05" /><path d="M5 13.200A6 6 0 0 0 14 14.500" stroke="#34a853" /><path d="M14 14.500Q16 12.700 16 10.200H10.300" stroke="#4285f4" /></g></svg>
          </IconButton>
          <IconButton aria-label="Share"><Line w={20} sw={1.500} color="#b5a7ae" d="M1.500 7V18.500H15V15M5 14Q6 7 13 6.500V2.500L19 8.500L13 14V10.500Q8 10.500 5 14Z" /></IconButton>
          <IconButton aria-label="Bookmark"><Solid w={22} color="#c2b6bc" d={ic.star} /></IconButton>
        </AddressBar>
        <IconButton aria-label="Extensions"><Solid w={20} d={ic.puzzle} /></IconButton>
        <IconButton aria-label="Side panel"><Solid w={18} box="0 0 18 18" d="M0 0H18V18H0ZM3 3V15H11V3Z" /></IconButton>
        <Avatar>T</Avatar>
        <IconButton aria-label="Menu"><Solid w={24} d={ic.dots} /></IconButton>
      </Toolbar>

      <Viewport>
        <Site>
          <Header>
            <Container>
              <LogoLink href="#"><UraLogo /></LogoLink>
              <HeaderSide>
                <TopLinks>
                  <TopLink $first href="#">Contact Us<Dot $color="#4b86c8" $right={12} /></TopLink>
                  <TopLink href="#">About Us</TopLink>
                  <TopLink href="#">Media Center<Solid w={20} h={22} d={ic.bell} /></TopLink>
                  <TopLink href="#">Sitemap</TopLink>
                  <TopLink href="#">Login<Dot $color="#1c56a4" $right={-6} /></TopLink>
                </TopLinks>
                <Tools>
                  <SearchBox>
                    <input type="search" placeholder="Search" aria-label="Search the site" />
                    <Line w={22} sw={2.500} color="#1c56a4" d="M9 2A7 7 0 1 0 9 16A7 7 0 1 0 9 2M14 14.500L21 21" />
                  </SearchBox>
                  <SelectBox $w={81} $gap={9} $r={5} $pad={7} $color="#5a5a5c">
                    <select aria-label="FAQs"><option>FAQs</option></select>
                    <svg width="9" height="6"><path d="M0 0H9L4.500 5Z" fill="#333" /></svg>
                  </SelectBox>
                  <SelectBox $w={179} $gap={10} $r={8} $pad={5} $color="#111">
                    <select aria-label="Select Language"><option>Select Language</option></select>
                    <svg width="12" height="12"><path d="M0 0H12L6 12Z" fill="#6a6a6c" /></svg>
                  </SelectBox>
                </Tools>
              </HeaderSide>
            </Container>
          </Header>
          <MainNav>
            <Access aria-label="Accessibility">
              <svg width="38" height="42" viewBox="0 0 38 42" fill="none" stroke="#fff" strokeWidth="3" strokeLinecap="round" strokeLinejoin="round">
                <circle cx="14" cy="4" r="3.500" fill="#fff" stroke="none" />
                <path d="M14 8V21H27L32 33L36 31.500" /><path d="M14 14H24" strokeWidth="2.500" />
                <path d="M9 17A11.500 11.500 0 1 0 25 32" strokeWidth="2.600" />
              </svg>
            </Access>
            <Container>{navItems.map((n) => <NavLink key={n} href="#">{n}</NavLink>)}</Container>
          </MainNav>
          <Crumbs>
            <Container>
              <BackButton><Line w={10} h={16} sw={3} d="M9 1L2.500 8L9 15" />Back</BackButton>
              {crumbs.map((c) => (
                <Crumb key={c}>
                  <a href="#">{c}</a>
                  <Line w={12} h={12} sw={3} color="#7fd0e8" d="M1 1.500L10 6L1 10.500" />
                </Crumb>
              ))}
              <Crumb $current>Instant TIN Registration</Crumb>
            </Container>
          </Crumbs>

          <Frame>
            <PageBody>
              <Upper>
                <Bubble $x={69} $y={91} $d={58} />
                <Bubble $x={191} $y={194} $d={44} $o={0.7} />
                <Bubble $x={216} $y={311} $d={54} $o={0.6} />
                <Band>
                  <FormCard>
                    <Panel $open $h={36} />
                    <Panel $h={202}>
                      <PanelHead />
                      <FieldTable>
                        <tbody>
                          {fields.map((f, i) => (
                            <tr key={f}><th scope="row">{f}</th><td>{i === 0 && <input aria-label={f} />}</td></tr>
                          ))}
                        </tbody>
                      </FieldTable>
                    </Panel>
                  </FormCard>
                </Band>
                <Bubble $x={1658} $y={352} $d={48} $o={0.5} />
              </Upper>
              <Footer>
                <div>
                  <FooterTitle>Useful Links</FooterTitle>
                  <FooterLinks>
                    <li><a href="#">Single window</a></li>
                    <li><a href="#">Ministry of finance</a></li>
                    <li><a href="#">UNBS</a></li>
                  </FooterLinks>
                </div>
                <div>
                  <FooterTitle>Follow Us</FooterTitle>
                  <Social>
                    <SocialLink $bg="#27355c" href="#" aria-label="Facebook">f</SocialLink>
                    <SocialLink $bg="#263d4e" href="#" aria-label="Twitter"><Solid w={17} d={ic.twitter} /></SocialLink>
                    <SocialLink $bg="#43292d" href="#" aria-label="Google plus">G+</SocialLink>
                  </Social>
                </div>
              </Footer>

              <Overlay>
                <Modal>
                  <ModalHead $h={95} $top={25} $pad={45} $drop={19} $color="#28292c">
                    <h2>Provisional Certificate</h2>
                    <IconButton aria-label="Close certificate"><CloseGlyph /></IconButton>
                  </ModalHead>
                  <ModalScroll>
                    <ModalContent>
                      <SlipLink href="#">Download Provisional Slip</SlipLink>
                      <Pdf>
                        <PdfBar>
                          <Line w={21} h={16} sw={3} d="M0 2H21M0 8H21M0 14H21" />
                          <PdfTitle>TENYWASA...</PdfTitle>
                          <PdfInput $w={29} defaultValue="1" aria-label="Page number" />
                          <PdfCount>/ 1</PdfCount>
                          <Rule />
                          <PdfTools $gap={20} $left="20px">
                            <Line w={15} h={2} d="M0 1H15" />
                            <PdfInput $w={55} defaultValue="60%" aria-label="Zoom level" />
                            <Line w={15} d="M7.500 0V15M0 7.500H15" />
                            <Rule />
                          </PdfTools>
                          <PdfTools $gap={22} $left="26px">
                            <svg width="23" height="20" fill="none" stroke="currentColor" strokeWidth="2"><rect x="1" y="1" width="21" height="18" rx="1" /><path d="M8.500 8L11.500 4L14.500 8ZM8.500 12L11.500 16L14.500 12Z" fill="currentColor" stroke="none" /></svg>
                            <Line w={23} d="M7 6.500L12.500 12L7 17.500L1.500 12ZM10 3.500H13A8.500 8.500 0 0 1 13 20.500H11M13 0L9.500 3.500L13 7" />
                          </PdfTools>
                          <PdfTools $gap={26} $left="auto">
                            <Solid w={24} d={ic.download} />
                            <Solid w={24} d={ic.print} />
                            <Solid w={24} d={ic.dots} />
                          </PdfTools>
                        </PdfBar>
                        <PdfBody>
                          <Thumbs>
                            <Thumb><ThumbPage><MiniLogo w={13} h={19} dim /></ThumbPage></Thumb>
                          </Thumbs>
                          <PaperView>
                            <Paper>
                              <PaperFrame>
                                <UraLogo width={139} dim />
                                <PaperText $left={239} $top={89}>services in Uganda Revenu</PaperText>
                                <PaperText $left={251}>additional registration inf</PaperText>
                                <PaperText $top={13}>Certificate Reference Number 999000003588256</PaperText>
                                <PaperText $top={23} $align="center">"Developing Uganda Together"</PaperText>
                                <PaperText $top={4} $align="center">Uganda Revenue Authority</PaperText>
                              </PaperFrame>
                            </Paper>
                          </PaperView>
                          <ScrollBar track="#77787b" thumb="#616265" arrow="#505154" parts={[0, 1, 0]} />
                        </PdfBody>
                      </Pdf>
                    </ModalContent>
                    <ScrollBar track="#747578" thumb="#616265" arrow="#505154" parts={[0, 478, 81]} />
                  </ModalScroll>
                </Modal>
              </Overlay>

              <Overlay $top={251}>
                <Dialog role="dialog" aria-label="Application Response">
                  <ModalHead $h={94} $top={23} $pad={40} $drop={16} $color="#2c2c2e">
                    <h2>Application Response</h2>
                    <IconButton aria-label="Close response"><CloseGlyph /></IconButton>
                  </ModalHead>
                  <DialogText>Your TIN application was successful. Your TIN is 1040017579 registered in names TENYWA SAMUEL NAIGAMBI</DialogText>
                  <Grip width="10" height="10" stroke="#555" strokeWidth="2"><path d="M0 10L10 0M3 10L10 3M6 10L10 6" /></Grip>
                </Dialog>
              </Overlay>

              <Chat>
                <ChatPill>Chat with us.</ChatPill>
                <svg width="60" height="39" viewBox="0 0 60 39">
                  <path d="M23 35Q34 40 47 34L59 37Q53 33 52 28Q58 17 47 7Q50 30 23 35Z" fill="#3f3e40" />
                  <path d="M25 1C37 1 46 8 46 18C46 28 37 34 25 34Q18 34 13 31L0 36Q6 31 7 26Q4 22 4 17C4 8 13 1 25 1Z" fill="#1a5aa8" />
                  <circle cx="25" cy="17" r="9.500" fill="#ffee00" /><circle cx="22" cy="14" r="1.200" fill="#333" /><circle cx="28.500" cy="14" r="1.200" fill="#333" />
                  <path d="M19.500 18.500Q25 25 30.500 18.500" fill="none" stroke="#333" strokeWidth="1.300" />
                </svg>
              </Chat>
            </PageBody>
            <ScrollBar track="#f1f1f1" thumb="#c1c1c1" arrow="#505050" parts={[360, 262, 32]} />
          </Frame>
        </Site>
        <OuterScroll />
      </Viewport>

      <Taskbar>
        <Weather>
          <svg width="33" height="40" viewBox="0 0 33 40">
            <defs><linearGradient id="sun" x1="0" y1="0" x2="1" y2="1"><stop stopColor="#f6b93b" /><stop offset="1" stopColor="#f0620f" /></linearGradient></defs>
            <circle cx="13" cy="26" r="12" fill="url(#sun)" /><circle cx="22" cy="12" r="10" fill="#c42b1c" />
            <text x="22" y="17" fontSize="14" fontFamily="Open Sans" textAnchor="middle" fill="#fff">1</text>
          </svg>
          <div><span>77°F</span><span>Sunny</span></div>
        </Weather>
        <Apps>
          <AppButton aria-label="Start">
            <svg width="30" height="30"><defs><linearGradient id="win" x1="0" y1="0" x2="1" y2="1"><stop stopColor="#4fd3fb" /><stop offset="1" stopColor="#0468cf" /></linearGradient></defs><path d="M0 1.500Q0 0 1.500 0H14.300V14.300H0ZM15.700 0H28.500Q30 0 30 1.500V14.300H15.700ZM0 15.700H14.300V30H1.500Q0 30 0 28.500ZM15.700 15.700H30V28.500Q30 30 28.500 30H15.700Z" fill="url(#win)" /></svg>
          </AppButton>
          <TaskSearch>
            <Line w={18} sw={2.200} d="M8 1.500A6.500 6.500 0 1 0 8 14.500A6.500 6.500 0 1 0 8 1.500M12.500 13L17 18" />
            <input placeholder="Search" aria-label="Search the computer" />
            <svg width="35" height="32" viewBox="0 0 35 32"><path d="M0 32Q2 28 9 28H26Q33 28 35 32Z" fill="#7089b0" /><path d="M6 10Q7 0 17.500 0Q28 0 29 10Q31 17 29 22Q25 30 17.500 30Q10 30 7 22Q4 17 6 10Z" fill="#c9ab7c" /><path d="M7 9Q17 4 28 9M9 14H15M20 14H26M17.500 12V19M13 23H22M15 26H20" stroke="#8d7148" strokeWidth="1.400" fill="none" /><path d="M11 3Q17 0 24 3L22 7H13Z" fill="#e5d0a8" /></svg>
          </TaskSearch>
          {appIcons.map(([name, art, state]) => (
            <AppButton key={name} aria-label={name} $active={state === "active"} $running={state === "running"}>{art}</AppButton>
          ))}
        </Apps>
        <Tray>
          <IconButton $w={36} aria-label="Hidden icons"><Line w={14} h={9} sw={2} d="M1 8L7 1.500L13 8" /></IconButton>
          <IconButton $w={40} aria-label="Wi-Fi"><svg width="20" height="16" fill="none" stroke="#1c1c1c" strokeWidth="1.500"><path d="M.8 6Q10-3.500 19.200 6M3.500 9Q10 2 16.500 9M6.200 11.800Q10 7.500 13.800 11.800" /><circle cx="10" cy="14" r="1.300" fill="#1c1c1c" /></svg></IconButton>
          <IconButton $w={24} aria-label="Volume"><Line w={20} h={16} sw={1.400} d="M1 5.500H4L8.500 1.500V14.500L4 10.500H1ZM11 5Q13.500 8 11 11M14 3Q18 8 14 13" /></IconButton>
          <IconButton $w={36} aria-label="Battery"><svg width="20" height="16"><rect x="1" y="4" width="16" height="11" rx="2.500" fill="none" stroke="#1c1c1c" strokeWidth="1.500" /><rect x="3" y="6.500" width="12" height="6.500" fill="#1c1c1c" /><path d="M18 7.500H20V11.500H18Z" fill="#1c1c1c" /><path d="M4-1L-1 6H3L2 10L8 3.500H4.500Z" fill="#1c1c1c" stroke="#c8ecee" strokeWidth=".7" /></svg></IconButton>
          <Clock>18:03<br />28/10/2023</Clock>
          <IconButton $w={20} aria-label="Notifications"><svg width="18" height="21" viewBox="0 0 18 21"><path d="M1 16.500L3 13V7Q3 1.500 8.500 1.500Q14 1.500 14 7V13L16.500 16.500ZM6 18H11.500Q11 20.500 8.700 20.500Q6.500 20.500 6 18Z" fill="#1c1c1c" /><path d="M6.500 6H11L6.500 12H11" fill="none" stroke="#fff" strokeWidth="1.400" /><path d="M13 .8H16.500L13 5H17" fill="none" stroke="#1c1c1c" strokeWidth="1.300" /></svg></IconButton>
        </Tray>
      </Taskbar>
    </Screen>
  );
}
